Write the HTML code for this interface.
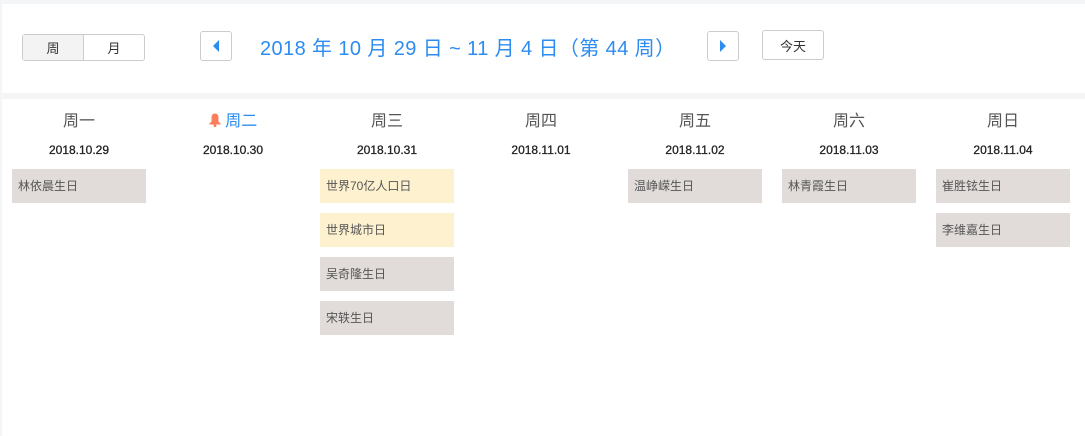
<!DOCTYPE html>
<html><head><meta charset="utf-8"><style>
*{margin:0;padding:0;box-sizing:border-box}
body{width:1085px;height:436px;background:#f4f5f7;font-family:"Liberation Sans","Noto Sans CJK SC",sans-serif;position:relative;overflow:hidden}
.top{position:absolute;left:2px;top:4px;width:1083px;height:89px;background:#fff}
.main{position:absolute;left:2px;top:99px;width:1083px;height:337px;background:#fff}
.seg{position:absolute;left:20px;top:30px;width:123px;height:27px;border:1px solid #ccc;border-radius:3px;display:flex;font-size:13px;color:#333}
.seg div{flex:1;display:flex;align-items:center;justify-content:center}
.seg div:first-child{background:#f4f3f4;border-right:1px solid #ccc}
.btn{position:absolute;top:27px;height:30px;border:1px solid #ccc;border-radius:3px;background:#fff;display:flex;align-items:center;justify-content:center;font-size:13px;color:#333}
.title{position:absolute;left:258px;top:28px;font-size:20px;color:#2d8cf0;white-space:nowrap;letter-spacing:0.4px}
.col{position:absolute;top:0;width:154px;text-align:center}
.wd{position:absolute;top:8px;width:100%;font-size:16px;color:#555}
.dt{position:absolute;top:44px;width:100%;font-size:12px;color:#222;-webkit-text-stroke:0.3px #222}
.ev{position:absolute;left:10px;width:134px;height:34px;line-height:34px;background:#e1dcd9;font-size:12px;color:#555;text-align:left;padding-left:6px}
.y{background:#fef1cf}
</style></head><body>
<div class="top">
<div class="seg"><div>周</div><div>月</div></div>
<div class="btn" style="left:198px;width:32px"><svg width="8" height="12"><path d="M7 0L1 6L7 12Z" fill="#2d8cf0"/></svg></div>
<div class="title">2018 年 10 月 29 日 ~ 11 月 4 日（第 44 周）</div>
<div class="btn" style="left:705px;width:32px"><svg width="8" height="12"><path d="M1 0L7 6L1 12Z" fill="#2d8cf0"/></svg></div>
<div class="btn" style="left:760px;width:62px;top:26px">今天</div>
</div>
<div class="main">
<div class="col" style="left:0"><div class="wd">周一</div><div class="dt">2018.10.29</div><div class="ev" style="top:70px">林依晨生日</div></div>
<div class="col" style="left:154px"><div class="wd" style="color:#2d8cf0"><svg width="12" height="14" viewBox="0 0 12 14" style="vertical-align:-1px"><path d="M6 0.5C3.5 0.5 2.5 2.5 2.5 5V8.5L0.5 10.5V11.5H11.5V10.5L9.5 8.5V5C9.5 2.5 8.5 0.5 6 0.5Z" fill="#fa7d5c"/><circle cx="6" cy="12.6" r="1.4" fill="#fa7d5c"/></svg> 周二</div><div class="dt">2018.10.30</div></div>
<div class="col" style="left:308px"><div class="wd">周三</div><div class="dt">2018.10.31</div>
<div class="ev y" style="top:70px">世界70亿人口日</div><div class="ev y" style="top:114px">世界城市日</div><div class="ev" style="top:158px">吴奇隆生日</div><div class="ev" style="top:202px">宋轶生日</div></div>
<div class="col" style="left:462px"><div class="wd">周四</div><div class="dt">2018.11.01</div></div>
<div class="col" style="left:616px"><div class="wd">周五</div><div class="dt">2018.11.02</div><div class="ev" style="top:70px">温峥嵘生日</div></div>
<div class="col" style="left:770px"><div class="wd">周六</div><div class="dt">2018.11.03</div><div class="ev" style="top:70px">林青霞生日</div></div>
<div class="col" style="left:924px"><div class="wd">周日</div><div class="dt">2018.11.04</div><div class="ev" style="top:70px">崔胜铉生日</div><div class="ev" style="top:114px">李维嘉生日</div></div>
</div>
</body></html>
